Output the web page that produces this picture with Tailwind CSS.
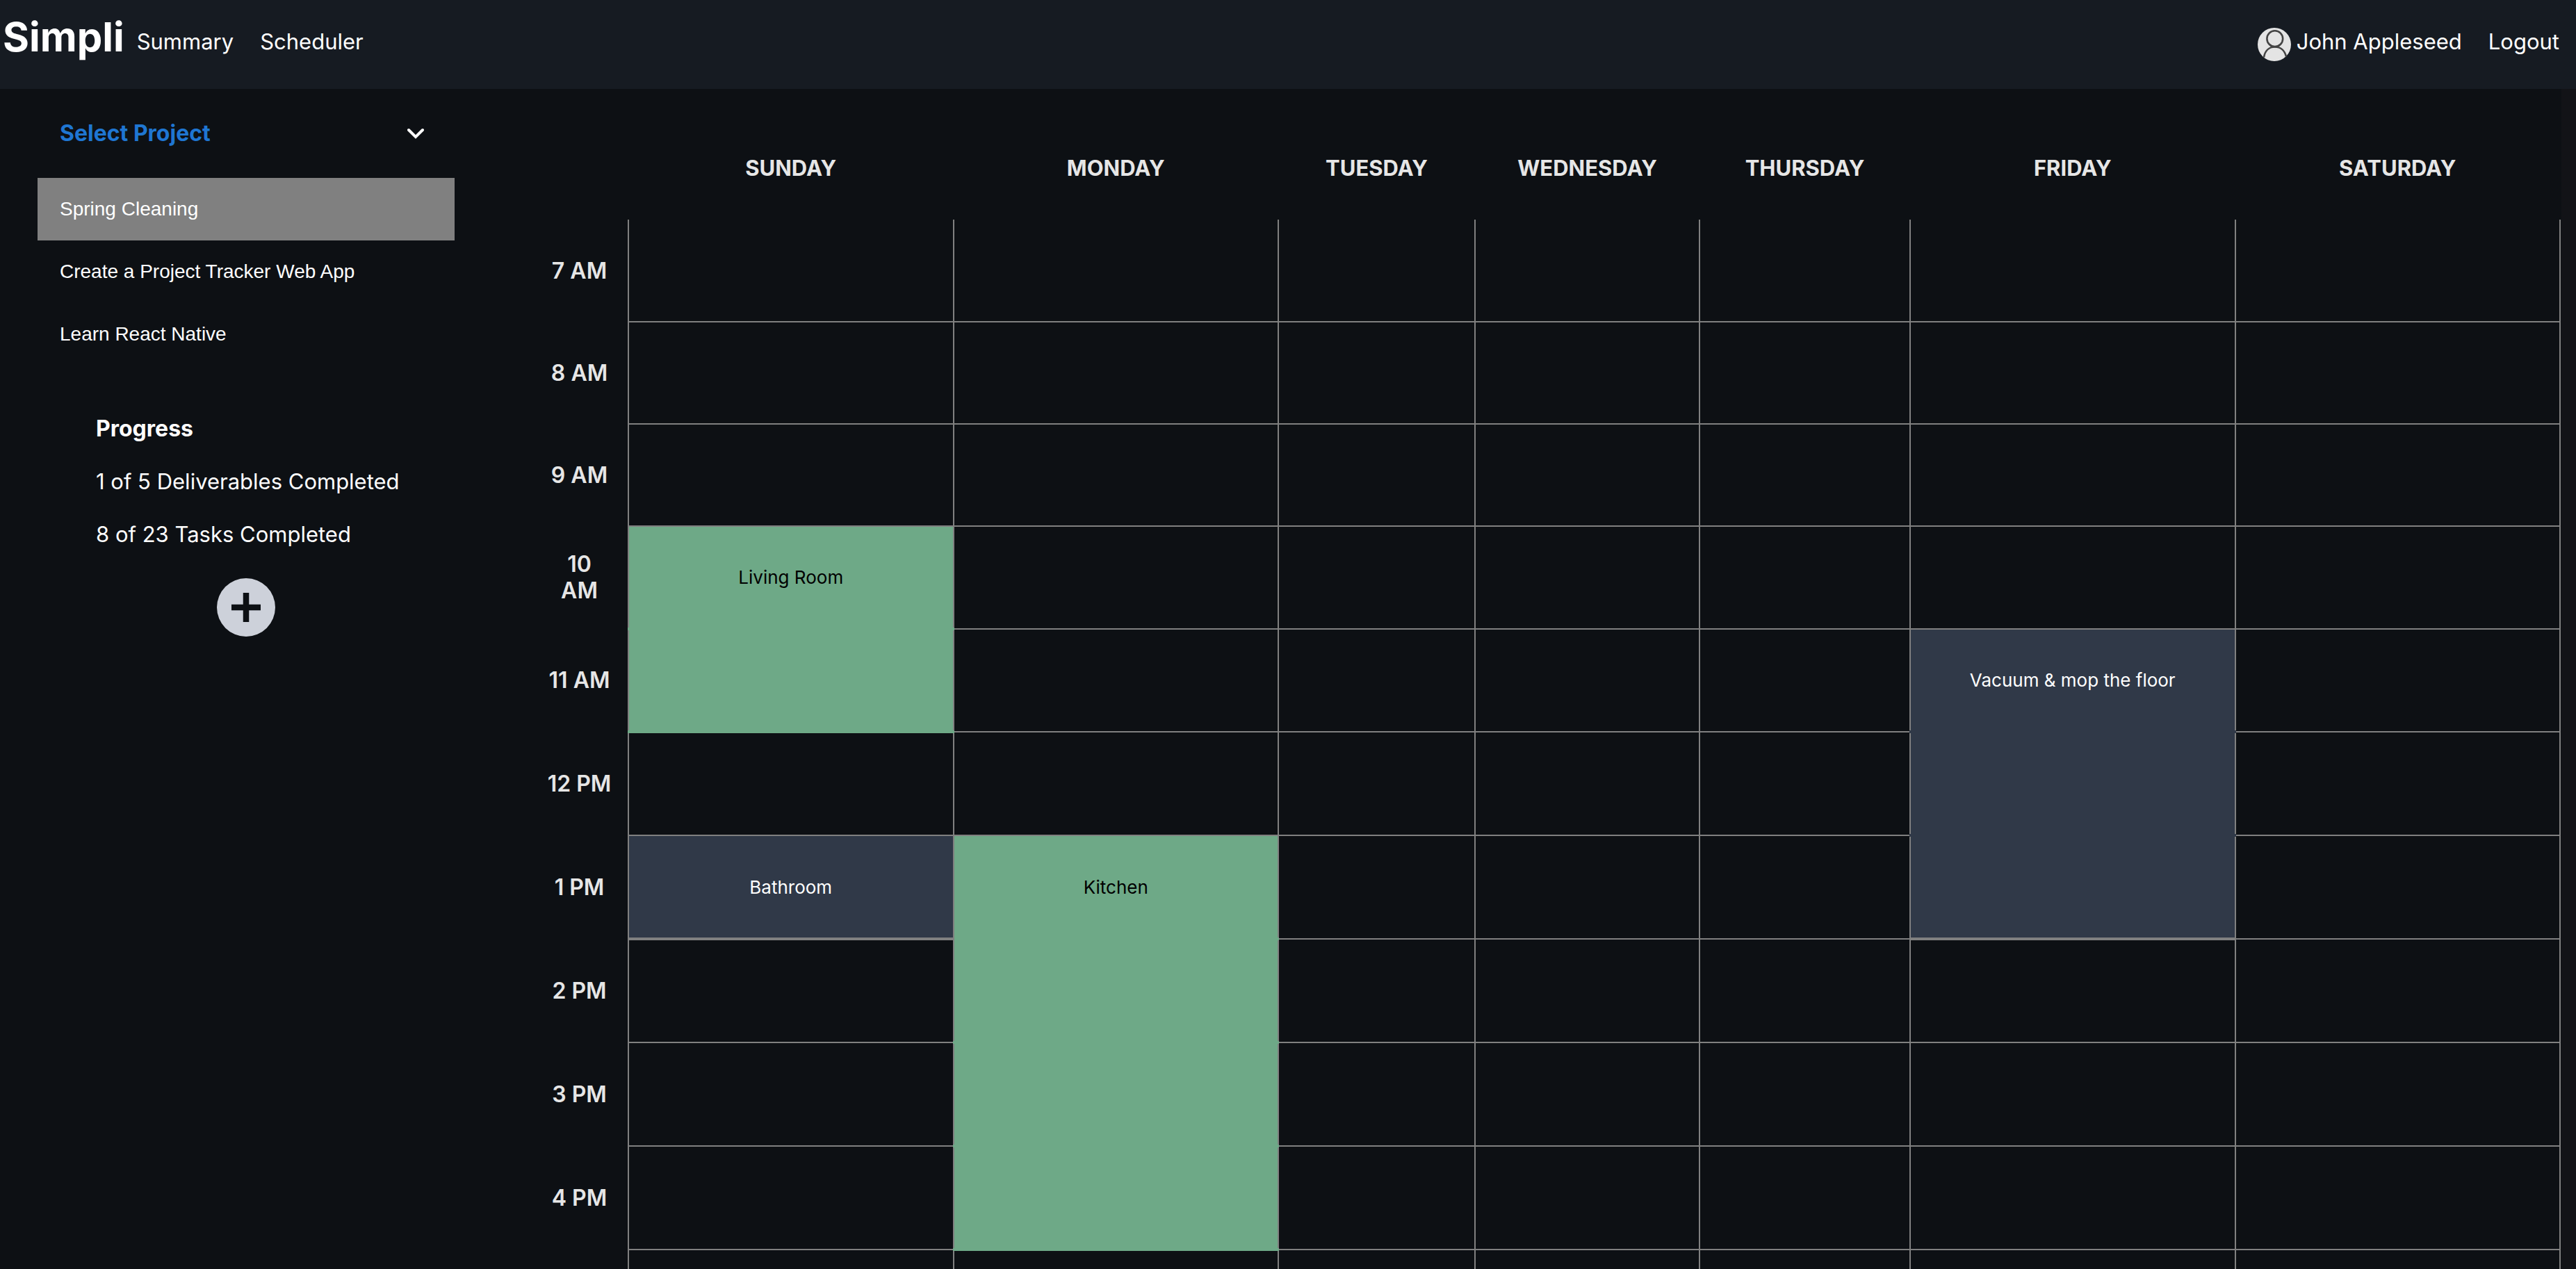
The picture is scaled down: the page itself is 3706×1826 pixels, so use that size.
<!DOCTYPE html>
<html lang="en">
<head>
<meta charset="utf-8">
<meta name="viewport" content="width=device-width, initial-scale=1">
<title>Simpli – Scheduler</title>
<script src="https://cdn.jsdelivr.net/npm/@tailwindcss/browser@4"></script>
</head>
<body class="flex h-screen flex-col overflow-hidden bg-[#121317] font-['Inter',sans-serif] text-[31px] text-white">

<header class="flex h-32 shrink-0 items-start justify-between bg-[#161b22] pl-1 pr-6">
  <div class="flex items-start gap-[18px]">
    <h1 class="text-[58px] leading-[106px] font-bold">Simpli</h1>
    <nav class="flex gap-[38px] leading-[120px]" aria-label="Main">
      <a href="#summary">Summary</a>
      <a href="#scheduler">Scheduler</a>
    </nav>
  </div>
  <div class="flex gap-[38px] leading-[120px]">
    <a href="#profile" class="flex items-center gap-2">
      <svg class="mt-2 size-12" viewBox="0 0 48 48" fill="none" stroke="#444" stroke-width="2.6" aria-hidden="true">
        <circle cx="24" cy="24" r="24" fill="#e4e4e4" stroke="none"/>
        <circle cx="24.8" cy="15.7" r="11.4"/>
        <path d="M9 42.500C10.500 33 16.500 27.500 24.800 27.500S39 33 41 41.500"/>
      </svg>
      John Appleseed
    </a>
    <a href="#logout">Logout</a>
  </div>
</header>

<main class="mr-[21px] flex min-h-0 flex-1 overflow-hidden bg-[#0d1014]">
  <aside class="w-[708px] shrink-0 px-[54px]">
    <button type="button" class="flex h-32 w-full items-center justify-between pl-8 pr-11 text-[32px] font-bold text-[#1f76d2]" aria-expanded="true">
      Select Project
      <svg class="h-4 w-6 text-white" viewBox="0 0 24 16" fill="none" stroke="currentColor" stroke-width="4" stroke-linecap="round" aria-hidden="true"><path d="M2 3L12 13L22 3"/></svg>
    </button>
    <ul class="font-['Liberation_Sans',sans-serif] text-[28px]">
      <li><a href="#p1" class="flex h-[90px] items-center bg-[#808080] px-8">Spring Cleaning</a></li>
      <li><a href="#p2" class="flex h-[90px] items-center px-8">Create a Project Tracker Web App</a></li>
      <li><a href="#p3" class="flex h-[90px] items-center px-8">Learn React Native</a></li>
    </ul>
    <section class="mt-[53px] pl-[84px] leading-[76px]">
      <h2 class="text-[32px] font-bold">Progress</h2>
      <p>1 of 5 Deliverables Completed</p>
      <p>8 of 23 Tasks Completed</p>
    </section>
    <button type="button" class="mx-auto mt-[25px] block" aria-label="Add project">
      <svg class="size-[84px]" viewBox="0 0 84 84" aria-hidden="true">
        <circle cx="42" cy="42" r="42" fill="#cdd1da"/>
        <path d="M21 42H63M42 21V63" stroke="#0d1014" stroke-width="8.500"/>
      </svg>
    </button>
  </aside>

  <div class="min-w-0 flex-1 pl-14 pr-px pt-10">
    <table class="w-full table-fixed border-collapse text-center">
      <colgroup>
        <col class="w-[140px]"><col><col>
        <col class="w-[283px]"><col class="w-[323px]"><col class="w-[303px]">
        <col><col>
      </colgroup>
      <thead class="text-[#e6e6e6]">
        <tr class="h-[148px]">
          <td></td>
          <th scope="col">SUNDAY</th><th scope="col">MONDAY</th><th scope="col">TUESDAY</th><th scope="col">WEDNESDAY</th><th scope="col">THURSDAY</th><th scope="col">FRIDAY</th><th scope="col">SATURDAY</th>
        </tr>
      </thead>
      <tbody id="hours" class="text-[26px]"></tbody>
    </table>
  </div>
</main>

<script>
  // One row per hour; each event fills a run of rows in its day's column.
  const hours = ['7 AM', '8 AM', '9 AM', '10<br>AM', '11 AM', '12 PM', '1 PM', '2 PM', '3 PM', '4 PM', ''];
  const heights = ['h-[147px]', 'h-[148px]', 'h-[149px]'];
  const events = [
    { day: 0, start: 3, length: 2, title: 'Living Room', done: true },
    { day: 0, start: 6, length: 1, title: 'Bathroom', done: false },
    { day: 1, start: 6, length: 4, title: 'Kitchen', done: true },
    { day: 5, start: 4, length: 3, title: 'Vacuum &amp; mop the floor', done: false },
  ];
  const body = document.getElementById('hours');
  body.innerHTML = hours.map((label, row) => {
    let cells = '';
    for (let day = 0; day < 7; day++) {
      const event = events.find(e => e.day === day && row >= e.start && row < e.start + e.length);
      let style = 'border-x-2 border-x-[#808080] border-b-2 border-b-[#808080]';
      if (event) {
        const last = row === event.start + event.length - 1;
        style = 'border-x-2 border-x-[#808080] border-b-4 ' + (event.done
          ? 'bg-[#6ea987] text-black border-b-[#6ea987]'
          : 'bg-[#303948] text-white ' + (last ? 'border-b-[#808080]' : 'border-b-[#303948]'));
      }
      cells += `<td class="${style}">${event && row === event.start ? event.title : ''}</td>`;
    }
    const height = heights[row < 3 ? 0 : row < 5 ? 1 : 2];
    return `<tr class="${height}"><th scope="row" class="text-[32px] leading-[38px] font-semibold text-[#e6e6e6]">${label}</th>${cells}</tr>`;
  }).join('');
</script>
</body>
</html>
